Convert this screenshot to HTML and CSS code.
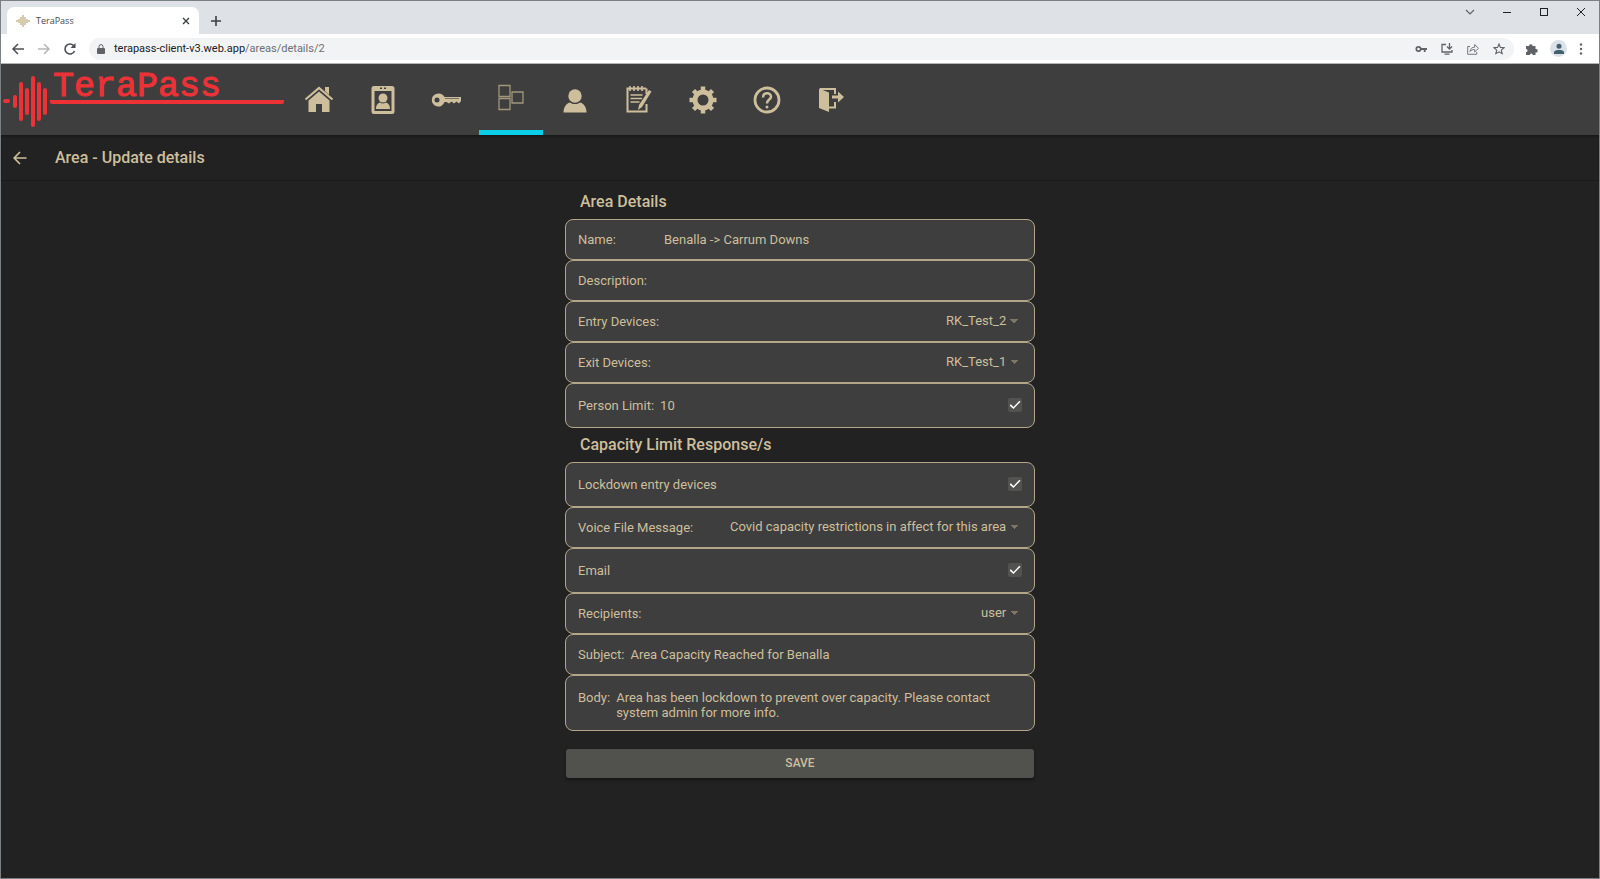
FILE: index.html
```html
<!DOCTYPE html>
<html lang="en">
<head>
  <meta charset="UTF-8">
  <meta name="viewport" content="width=device-width, initial-scale=1">
  <title>TeraPass</title>
  <link rel="stylesheet" href="styles.css">
</head>
<body>
  <div class="window">
    <!-- Browser tabs -->
    <div class="tabbar">
      <div class="tab">
        <svg class="favicon" viewBox="0 0 14 14" width="14" height="14"><path d="M1 6v2M3 5v4M5 3v8M7 1v12M9 3v8M11 5v4M13 6v2" stroke="#cdbf9c" stroke-width="1.6"/></svg>
        <span class="tab-title">TeraPass</span>
        <button class="chrome-btn" aria-label="Close tab"><svg viewBox="0 0 8 8" width="8" height="8"><path d="M1 1l6 6M7 1L1 7" stroke="#3c4043" stroke-width="1.4"/></svg></button>
      </div>
      <button class="chrome-btn new-tab" aria-label="New tab"><svg viewBox="0 0 10 10" width="10" height="10"><path d="M5 0v10M0 5h10" stroke="#3c4043" stroke-width="1.6"/></svg></button>
      <div class="window-controls">
        <button class="chrome-btn" aria-label="Search tabs"><svg viewBox="0 0 10 10" width="10" height="10"><path d="M1 3l4 4 4-4" stroke="#5f6368" stroke-width="1.2" fill="none"/></svg></button>
        <button class="chrome-btn" aria-label="Minimize"><svg viewBox="0 0 10 10" width="10" height="10"><path d="M1 5.5h8" stroke="#202124"/></svg></button>
        <button class="chrome-btn" aria-label="Maximize"><svg viewBox="0 0 10 10" width="10" height="10"><rect x="1.5" y="1.5" width="7" height="7" fill="none" stroke="#202124"/></svg></button>
        <button class="chrome-btn" aria-label="Close"><svg viewBox="0 0 10 10" width="10" height="10"><path d="M1 1l8 8M9 1L1 9" stroke="#202124"/></svg></button>
      </div>
    </div>

    <!-- Address bar -->
    <div class="urlbar">
      <button class="chrome-btn" aria-label="Back"><svg viewBox="0 0 14 14" width="14" height="14"><path d="M13 7H2M7 2L2 7l5 5" stroke="#4b4f53" stroke-width="1.5" fill="none"/></svg></button>
      <button class="chrome-btn" aria-label="Forward"><svg viewBox="0 0 14 14" width="14" height="14"><path d="M1 7h11M7 2l5 5-5 5" stroke="#b5b8bb" stroke-width="1.5" fill="none"/></svg></button>
      <button class="chrome-btn" aria-label="Reload"><svg viewBox="0 0 14 14" width="14" height="14"><path d="M11.6 9A5 5 0 1 1 11 4" stroke="#4b4f53" stroke-width="1.6" fill="none"/><path d="M12.5 1v5h-5z" fill="#4b4f53"/></svg></button>
      <div class="address">
        <svg viewBox="0 0 8 10" width="8" height="10"><rect y="4" width="8" height="6" rx="1" fill="#5f6368"/><path d="M2 4V2.6a2 2 0 0 1 4 0V4" stroke="#5f6368" fill="none"/></svg>
        <span class="url">terapass-client-v3.web.app<span class="path">/areas/details/2</span></span>
        <div class="address-icons">
          <button class="chrome-btn" aria-label="Passwords"><svg viewBox="0 0 12 12" width="12" height="12"><circle cx="3.5" cy="6" r="2.2" fill="none" stroke="#5f6368" stroke-width="1.7"/><path d="M5.5 6H12M9.7 6v3" stroke="#5f6368" stroke-width="1.8"/></svg></button>
          <button class="chrome-btn" aria-label="Install"><svg viewBox="0 0 12 12" width="12" height="12"><path d="M5 1.5H1V9h10V7M3.5 11.2h5" stroke="#5f6368" stroke-width="1.3" fill="none"/><path d="M8.5 0v5M6 3.5L8.5 6 11 3.5" stroke="#5f6368" stroke-width="1.3" fill="none"/></svg></button>
          <button class="chrome-btn" aria-label="Share"><svg viewBox="0 0 12 12" width="12" height="12"><path d="M3 3.5H.7v7.8h9V9" stroke="#74787c" fill="none"/><path d="M3 8.5c.4-3 2-4.3 4.7-4.3V1.500l3.800 3.800L7.700 9V6.500C5.600 6.500 4.200 7 3 8.500z" stroke="#74787c" fill="none"/></svg></button>
          <button class="chrome-btn" aria-label="Bookmark"><svg viewBox="0 0 12 12" width="12" height="12"><path d="M6 1l1.400 3.400 3.700.3-2.800 2.400.9 3.600L6 8.800l-3.200 1.900.9-3.600L.9 4.700l3.700-.3z" stroke="#5f6368" stroke-width="1.1" fill="none"/></svg></button>
        </div>
      </div>
      <button class="chrome-btn" aria-label="Extensions"><svg viewBox="0 0 12 12" width="12" height="12"><path d="M0 3h3a1.800 1.800 0 1 1 3.600 0H9.500v3a1.800 1.800 0 1 1 0 3.500V12H6.800a1.500 1.500 0 0 0-3 0H0V9a1.500 1.500 0 0 0 0-3z" fill="#5f6368"/></svg></button>
      <button class="chrome-btn avatar" aria-label="Profile"><svg viewBox="0 0 12 12" width="12" height="12"><circle cx="6" cy="3.3" r="2.5" fill="#44606e"/><path d="M1 11V9.500C1 7.500 4 7 6 7s5 .5 5 2.500V11z" fill="#44606e"/></svg></button>
      <button class="chrome-btn menu" aria-label="Menu"><svg viewBox="0 0 4 12" width="4" height="12"><g fill="#5f6368"><circle cx="2" cy="1.5" r="1.2"/><circle cx="2" cy="6" r="1.2"/><circle cx="2" cy="10.5" r="1.2"/></g></svg></button>
    </div>

    <!-- App header -->
    <header class="header">
      <a class="logo" href="#" aria-label="TeraPass home">
        <svg viewBox="0 0 46 54" width="46" height="54"><path d="M2 28h3M12 24v9M18 11v35M24 17v23M30 5v47M36 11v35M42 17v23" stroke="#ec3237" stroke-width="4" stroke-linecap="round"/></svg>
        <span class="logo-text">TeraPass</span>
      </a>
      <nav class="nav">
        <a href="#" aria-label="Home"><svg viewBox="0 0 32 32" width="32" height="32"><path d="M22 3h4v8l-4-4z"/><path d="M2.500 15.500L16 4l13.500 11.500" fill="none" stroke="#cdbf9c" stroke-width="2.2"/><path d="M5.500 16.500L16 7.500l10.500 9V28H19v-8h-6v8H5.500z"/></svg></a>
        <a href="#" aria-label="Cards"><svg viewBox="0 0 32 32" width="32" height="32"><path fill-rule="evenodd" d="M7 2h18q2.500 0 2.500 2.500v23Q27.500 30 25 30H7q-2.500 0-2.500-2.500v-23Q4.500 2 7 2zm.5 5v20h17V7zM13 3.500V5h2V3.500zm4 0V5h2V3.500z"/><circle cx="16" cy="14" r="4.5"/><path d="M9 25c0-4 2-6 4-6.500q3 2 6 0c2 .5 4 2.500 4 6.500z"/></svg></a>
        <a href="#" aria-label="Keys"><svg viewBox="0 0 32 32" width="32" height="32"><path fill-rule="evenodd" d="M7.500 9.500a6.500 6.500 0 0 1 6 3.500H30v4l-2 2.500-2.500-2-2.500 2-2.500-2-2.500 2-2.500-1.500h-2A6.500 6.500 0 1 1 7.500 9.500zM6 13.500a2.500 2.500 0 1 0 0 5 2.500 2.500 0 0 0 0-5z"/><path d="M14 14.500h14" stroke="#77705f"/></svg></a>
        <a href="#" class="active" aria-label="Areas"><svg viewBox="0 0 32 32" width="32" height="32"><path d="M4 1.500h11v11H4zM4 14.500h11v11H4zM17 8h11v11H17z" fill="none" stroke="#a0967c" stroke-width="1.3"/></svg></a>
        <a href="#" aria-label="People"><svg viewBox="0 0 32 32" width="32" height="32"><circle cx="16" cy="12" r="6.7"/><path d="M4.500 28.500c0-6 3.500-9.500 6.500-10 3 2 7 2 10 0 3 .5 6.500 4 6.500 10z"/></svg></a>
        <a href="#" aria-label="Reports"><svg viewBox="0 0 32 32" width="32" height="32"><path d="M23 4.500H4.500v23h19V20M23.500 4.500V10" fill="none" stroke="#cdbf9c" stroke-width="2"/><path d="M7 2v5M11 2v5M15 2v5M19 2v5" stroke="#cdbf9c" stroke-width="1.6"/><path d="M7.500 11h12M7.500 14.500H19M7.500 18h9" stroke="#cdbf9c" stroke-width="1.6"/><path d="M26 6l2.500 1.500L19 23l-4 3 1-5z"/></svg></a>
        <a href="#" aria-label="Settings"><svg viewBox="0 0 32 32" width="32" height="32"><circle cx="16" cy="16" r="8" fill="none" stroke="#cdbf9c" stroke-width="5"/><path d="M16 2.500v5M16 24.500v5M2.500 16h5M24.500 16h5M6.500 6.500L10 10M22 22l3.500 3.500M25.500 6.500L22 10M6.500 25.500L10 22" stroke="#cdbf9c" stroke-width="4.5"/></svg></a>
        <a href="#" aria-label="Help"><svg viewBox="0 0 32 32" width="32" height="32"><g fill="none" stroke="#cdbf9c"><circle cx="16" cy="16" r="12" stroke-width="2.8"/><path d="M12 13.500c0-5.500 8-5.500 8-.7 0 3-4 2.700-4 6.700" stroke-width="2.5"/></g><circle cx="16" cy="23" r="1.5"/></svg></a>
        <a href="#" aria-label="Log out"><svg viewBox="0 0 32 32" width="32" height="32"><path d="M4 4.500l10 4V28L4 24z"/><path d="M5 5h15v5M20 18v5.500h-6" fill="none" stroke="#cdbf9c" stroke-width="2"/><path d="M17 11.500h6v-4l6 5.500-6 5.500v-4h-6z"/></svg></a>
      </nav>
    </header>

    <div class="toolbar">
      <button class="back" aria-label="Back"><svg viewBox="0 0 14 14" width="14" height="14"><path d="M13.500 7H1.500M7 1L1.200 7 7 13" stroke="#cdbf9c" stroke-width="1.7" fill="none"/></svg></button>
      <h1>Area - Update details</h1>
    </div>

    <main>
      <form class="form">
        <h2>Area Details</h2>
        <div class="row">
          <label class="name-label" for="name">Name:</label>
          <input type="text" id="name" value="Benalla -&gt; Carrum Downs">
        </div>
        <div class="row">
          <label for="description">Description:</label>
          <input type="text" id="description">
        </div>
        <div class="row">
          <label for="entry">Entry Devices:</label>
          <select id="entry"><option>RK_Test_2</option></select>
        </div>
        <div class="row">
          <label for="exit">Exit Devices:</label>
          <select id="exit"><option>RK_Test_1</option></select>
        </div>
        <div class="row tall">
          <label for="limit">Person Limit:</label>
          <input type="text" id="limit" value="10">
          <input type="checkbox" aria-label="Enable person limit" checked>
        </div>

        <h2>Capacity Limit Response/s</h2>
        <div class="row tall">
          <label for="lockdown">Lockdown entry devices</label>
          <input type="checkbox" id="lockdown" checked>
        </div>
        <div class="row">
          <label for="voice">Voice File Message:</label>
          <select id="voice"><option>Covid capacity restrictions in affect for this area</option></select>
        </div>
        <div class="row tall">
          <label for="email">Email</label>
          <input type="checkbox" id="email" checked>
        </div>
        <div class="row">
          <label for="recipients">Recipients:</label>
          <select id="recipients"><option>user</option></select>
        </div>
        <div class="row">
          <label for="subject">Subject:</label>
          <input type="text" id="subject" value="Area Capacity Reached for Benalla">
        </div>
        <div class="row body-row">
          <label for="body">Body:</label>
          <textarea id="body" rows="2">Area has been lockdown to prevent over capacity. Please contact system admin for more info.</textarea>
        </div>
        <button type="button" class="save">SAVE</button>
      </form>
    </main>
  </div>
</body>
</html>
```

FILE: styles.css
```css
* {
  box-sizing: border-box;
}
body {
  margin: 0;
  background-color: #222222;
  color: #cdbf9c;
  font-family: Roboto, sans-serif;
  font-size: 13px;
}
svg {
  display: block;
}
button, input, select, textarea {
  margin: 0;
  padding: 0;
  border: none;
  background: none;
  color: inherit;
  font: inherit;
}
.window {
  min-height: 100vh;
  border: 1px solid #7b8084;
}

/* browser chrome */
.tabbar {
  display: flex;
  align-items: flex-end;
  height: 33px;
  padding-left: 6px;
  background-color: #dee1e6;
}
.tab {
  display: flex;
  align-items: center;
  gap: 6px;
  width: 192px;
  height: 27px;
  padding: 0 9px;
  background-color: white;
  border-radius: 7px 7px 0 0;
}
.tab-title {
  flex: 1;
  color: #45494d;
  font-family: "Open Sans", sans-serif;
  font-size: 9px;
}
.chrome-btn {
  display: flex;
  align-items: center;
  justify-content: center;
}
.new-tab {
  width: 34px;
  height: 27px;
}
.window-controls {
  display: flex;
  align-self: flex-start;
  margin-left: auto;
}
.window-controls .chrome-btn {
  width: 37px;
  height: 22px;
}
.urlbar {
  display: flex;
  align-items: center;
  gap: 12px;
  height: 30px;
  padding: 0 16px 0 10px;
  background-color: white;
  border-bottom: 1px solid #b4b4b4;
}
.address {
  display: flex;
  flex: 1;
  align-items: center;
  gap: 9px;
  height: 22px;
  padding: 0 9px 0 8px;
  background-color: #f1f3f4;
  border-radius: 11px;
}
.url {
  color: #202124;
  font-family: Roboto, sans-serif;
  font-size: 11px;
}
.path {
  color: #6b6f73;
}
.address-icons {
  display: flex;
  gap: 14px;
  margin-left: auto;
}
.avatar {
  width: 17px;
  height: 17px;
  background-color: #dbe1e8;
  border-radius: 50%;
}

/* app header */
.header {
  display: flex;
  height: 71px;
  background-color: #3e3e3e;
}
.logo {
  display: flex;
  width: 286px;
  padding: 9px 3px 0 2px;
  color: #ec3237;
  text-decoration: none;
}
.logo-text {
  flex: 1;
  height: 31px;
  margin-left: 1px;
  padding-left: 3px;
  border-bottom: 4px solid #ec3237;
  border-radius: 2px;
  font-family: "Liberation Mono", monospace;
  font-size: 35px;
  line-height: 28px;
  -webkit-text-stroke: 1px #ec3237;
}
.nav {
  display: flex;
}
.nav a {
  display: flex;
  justify-content: center;
  width: 64px;
  padding-top: 20px;
  fill: #cdbf9c;
}
.nav .active {
  border-bottom: 5px solid #0bcfe8;
}
.toolbar {
  display: flex;
  align-items: center;
  gap: 28px;
  height: 46px;
  padding-left: 12px;
  border-bottom: 1px solid #1b1b1b;
  box-shadow: inset 0 2px 2px #1a1a1a;
}
h1, h2 {
  margin: 0;
  font-size: 16px;
  font-weight: 500;
}

/* area form */
.form {
  display: flex;
  flex-direction: column;
  width: 100%;
  max-width: 470px;
  margin: 0 auto;
}
h2 {
  padding: 11px 15px 0;
  height: 38px;
  line-height: 20px;
}
h2:not(:first-child) {
  height: 34px;
  padding-top: 7px;
}
.row {
  display: flex;
  align-items: center;
  gap: 6px;
  min-height: 41px;
  padding: 0 12px 1px;
  background-color: #3e3e3e;
  border: 1px solid #b3a688;
  border-radius: 8px;
}
.tall {
  min-height: 45px;
}
.row input[type="text"], textarea {
  flex: 1;
  min-width: 0;
}
.name-label {
  width: 80px;
}
select {
  margin-left: auto;
  padding: 0 15px 2px 0;
  appearance: none;
  background: conic-gradient(from 315deg at 50% 100%, #7e7766 90deg, transparent 0) right 4px center / 8px 4px no-repeat;
}
input[type="checkbox"] {
  display: grid;
  place-content: center;
  width: 14px;
  height: 14px;
  margin-left: auto;
  appearance: none;
  background-color: #525250;
  border-radius: 2px;
}
input[type="checkbox"]:checked::before {
  content: "";
  width: 11px;
  height: 9px;
  background-color: white;
  clip-path: polygon(0 55%, 12% 42%, 36% 72%, 90% 4%, 100% 14%, 36% 94%);
}
.body-row {
  align-items: flex-start;
  min-height: 56px;
  padding-top: 14px;
  line-height: 15px;
}
textarea {
  display: block;
  height: 30px;
  padding-right: 30px;
  overflow: hidden;
  resize: none;
}
.save {
  height: 29px;
  margin: 18px 1px 0;
  padding-bottom: 1px;
  background-color: #51514e;
  border-radius: 3px;
  box-shadow: 0 2px 3px #151515;
  font-size: 12px;
  font-weight: 500;
}
```
